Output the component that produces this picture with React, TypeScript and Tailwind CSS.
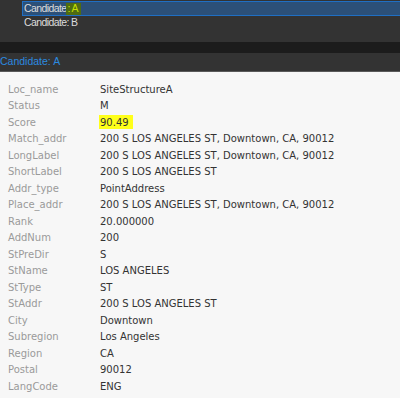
import React from 'react';

const rows: Array<[string, string]> = [
  ['Loc_name', 'SiteStructureA'],
  ['Status', 'M'],
  ['Score', '90.49'],
  ['Match_addr', '200 S LOS ANGELES ST, Downtown, CA, 90012'],
  ['LongLabel', '200 S LOS ANGELES ST, Downtown, CA, 90012'],
  ['ShortLabel', '200 S LOS ANGELES ST'],
  ['Addr_type', 'PointAddress'],
  ['Place_addr', '200 S LOS ANGELES ST, Downtown, CA, 90012'],
  ['Rank', '20.000000'],
  ['AddNum', '200'],
  ['StPreDir', 'S'],
  ['StName', 'LOS ANGELES'],
  ['StType', 'ST'],
  ['StAddr', '200 S LOS ANGELES ST'],
  ['City', 'Downtown'],
  ['Subregion', 'Los Angeles'],
  ['Region', 'CA'],
  ['Postal', '90012'],
  ['LangCode', 'ENG'],
];

export default function App() {
  return (
    <div className="w-[400px] h-[398px] overflow-hidden bg-[#f7f7f7] font-['DejaVu_Sans',sans-serif]">
      {/* candidate list */}
      <div className="h-[42px] bg-[#333333] pt-[1px] text-[10.5px] tracking-[-0.6px] text-[#dcdcdc] font-['Liberation_Sans',sans-serif]">
        <div className="ml-[22px] h-[15px] border-y border-l border-[#1f6fc4] bg-[#2c5078] pl-[1px] flex items-center">
          <span>Candidate</span>
          <span className="h-[12px] flex items-center bg-[#4f6b12] text-[#c6e000] pl-[1px] pr-[3px]">: A</span>
        </div>
        <div className="ml-[24px] h-[14px] flex items-center">Candidate: B</div>
      </div>
      <div className="h-[11px] bg-[#1c1c1c]" />

      {/* details header */}
      <div className="h-[18px] bg-[#333333] flex items-center text-[10.5px] text-[#2b8ae0] font-['Liberation_Sans',sans-serif]">
        Candidate: A
      </div>
      <div className="h-[1px] bg-[#5a5a5a]" />

      {/* attribute table */}
      <div className="pt-[9px] text-[10px]">
        {rows.map(([name, value]) => (
          <div key={name} className="h-[16.5px] flex items-center">
            <span className="w-[100px] pl-[8px] text-[#9a9a9a]">{name}</span>
            {name === 'Score' ? (
              <span className="h-[14px] -ml-[1px] px-[1px] pr-[4px] flex items-center bg-[#ffff1a] text-[#333333]">
                {value}
              </span>
            ) : (
              <span className="text-[#333333]">{value}</span>
            )}
          </div>
        ))}
      </div>
    </div>
  );
}
